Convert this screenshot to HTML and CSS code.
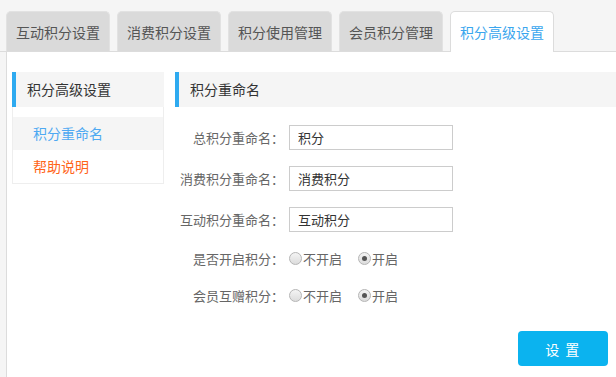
FILE: index.html
```html
<!DOCTYPE html>
<html lang="zh-CN">
<head>
    <meta charset="UTF-8">
    <meta name="viewport" content="width=device-width, initial-scale=1.0">
    <title>积分高级设置</title>
    <link rel="stylesheet" href="styles.css">
</head>
<body>
    <div class="tabs">
        <div class="tab">互动积分设置</div>
        <div class="tab">消费积分设置</div>
        <div class="tab">积分使用管理</div>
        <div class="tab">会员积分管理</div>
        <div class="tab active">积分高级设置</div>
    </div>

    <div class="panel">
        <div class="sidebar">
            <div class="box-title">积分高级设置</div>
            <ul class="side-menu">
                <li class="current">积分重命名</li>
                <li class="help">帮助说明</li>
            </ul>
        </div>

        <div class="main">
            <div class="box-title">积分重命名</div>
            <form class="settings" onsubmit="event.preventDefault()">
                <div class="form-row">
                    <label class="label" for="total">总积分重命名：</label>
                    <input class="text" type="text" id="total" value="积分">
                </div>
                <div class="form-row">
                    <label class="label" for="consume">消费积分重命名：</label>
                    <input class="text" type="text" id="consume" value="消费积分">
                </div>
                <div class="form-row">
                    <label class="label" for="interact">互动积分重命名：</label>
                    <input class="text" type="text" id="interact" value="互动积分">
                </div>
                <div class="form-row radio-row">
                    <span class="label">是否开启积分：</span>
                    <label class="radio"><input type="radio" name="open"><i></i>不开启</label>
                    <label class="radio"><input type="radio" name="open" checked><i></i>开启</label>
                </div>
                <div class="form-row radio-row">
                    <span class="label">会员互赠积分：</span>
                    <label class="radio"><input type="radio" name="give"><i></i>不开启</label>
                    <label class="radio"><input type="radio" name="give" checked><i></i>开启</label>
                </div>
                <div class="actions">
                    <button type="submit">设 置</button>
                </div>
            </form>
        </div>
    </div>
</body>
</html>
```

FILE: styles.css
```css
* {
    box-sizing: border-box;
}
body {
    margin: 0;
    background: #f5f5f5;
    font-family: "Noto Sans CJK SC", "Liberation Sans", sans-serif;
    color: #333;
    height: 377px;
    overflow: hidden;
}
.tabs {
    display: flex;
    gap: 7px;
    padding: 11px 0 0 6px;
    border-bottom: 1px solid #dcdcdc;
}
.tab {
    width: 104px;
    height: 40px;
    line-height: 40px;
    text-align: center;
    font-size: 14px;
    color: #555;
    background: #dadada;
    border: 1px solid #e2e2e2;
    border-bottom: none;
    border-radius: 5px 5px 0 0;
}
.tab.active {
    background: #fff;
    color: #3aa6ee;
    border-color: #dcdcdc;
    height: 41px;
    margin-bottom: -1px;
}
.panel {
    display: flex;
    gap: 11px;
    margin-left: 6px;
    padding: 20px 0 0 5px;
    background: #fff;
    border-left: 1px solid #dcdcdc;
    height: 326px;
}
.box-title {
    height: 35px;
    line-height: 35px;
    background: #f5f5f5;
    border-left: 4px solid #2eaaf0;
    font-size: 14px;
    color: #333;
}
.sidebar {
    width: 152px;
}
.sidebar .box-title {
    padding-left: 11px;
}
.side-menu {
    list-style: none;
    margin: 0;
    padding: 10px 0 0;
    border: 1px solid #eee;
    border-top: none;
}
.side-menu li {
    height: 33px;
    line-height: 33px;
    padding-left: 20px;
    font-size: 14px;
}
.side-menu .current {
    background: #f5f5f5;
    color: #4ea9f2;
}
.side-menu .help {
    color: #ff6418;
}
.main {
    flex: 1;
}
.main .box-title {
    padding-left: 11px;
}
.settings {
    padding-top: 18px;
}
.form-row {
    display: flex;
    align-items: center;
    height: 25px;
    margin-bottom: 16px;
    font-size: 13px;
}
.radio-row {
    height: 22px;
    margin-top: -1px;
}
.label {
    width: 109px;
    text-align: right;
    color: #666;
    margin-right: 5px;
    white-space: nowrap;
}
.text {
    width: 164px;
    height: 25px;
    border: 1px solid #ccc;
    padding: 0 8px;
    font: inherit;
    font-size: 13px;
    color: #333;
    outline: none;
}
.radio {
    display: flex;
    align-items: center;
    color: #666;
    margin-right: 16px;
}
.radio input {
    display: none;
}
.radio i {
    width: 13px;
    height: 13px;
    border-radius: 50%;
    border: 1px solid #b5b5b5;
    background: linear-gradient(#f4f4f4, #dcdcdc);
    margin-right: 1px;
    position: relative;
}
.radio input:checked + i::after {
    content: "";
    position: absolute;
    left: 3px;
    top: 3px;
    width: 5px;
    height: 5px;
    border-radius: 50%;
    background: #555;
}
.actions {
    display: flex;
    justify-content: flex-end;
    padding: 9px 8px 0 0;
}
button {
    width: 90px;
    height: 35px;
    background: #0bb3ef;
    color: #fff;
    border: none;
    border-radius: 4px;
    font: inherit;
    font-size: 14px;
    letter-spacing: 1.5px;
    cursor: pointer;
}
```
